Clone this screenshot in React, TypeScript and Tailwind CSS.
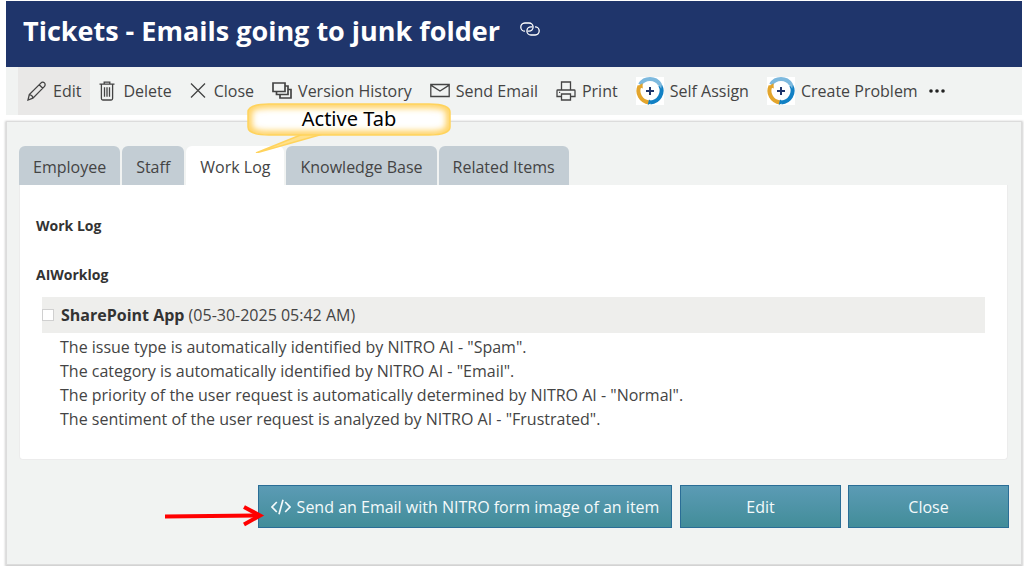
import React from 'react';

const toolbarItems = [
  { label: 'Edit', icon: <PencilIcon />, active: true },
  { label: 'Delete', icon: <TrashIcon /> },
  { label: 'Close', icon: <CrossIcon /> },
  { label: 'Version History', icon: <HistoryIcon /> },
  { label: 'Send Email', icon: <MailIcon /> },
  { label: 'Print', icon: <PrintIcon /> },
  { label: 'Self Assign', icon: <ActionIcon /> },
  { label: 'Create Problem', icon: <ActionIcon /> },
];

const tabs = ['Employee', 'Staff', 'Work Log', 'Knowledge Base', 'Related Items'];

const logLines = [
  'The issue type is automatically identified by NITRO AI - "Spam".',
  'The category is automatically identified by NITRO AI - "Email".',
  'The priority of the user request is automatically determined by NITRO AI - "Normal".',
  'The sentiment of the user request is analyzed by NITRO AI - "Frustrated".',
];

const lineIcon = {
  viewBox: '0 0 20 20',
  fill: 'none',
  stroke: 'currentColor',
  strokeWidth: 1.3,
  'aria-hidden': true,
} as const;

function PencilIcon() {
  return (
    <svg {...lineIcon} className="w-5 h-5 shrink-0">
      <path d="M1 19l1.3-5.4L13.8 2.1c1.1-1.1 2.7-1.1 3.6-.2 1 1 1 2.6-.1 3.7L5.9 17.1 1 19zM2.4 13.7c1.8.2 3.2 1.5 3.6 3.3M12.2 3.7l3.6 3.6" />
    </svg>
  );
}

function TrashIcon() {
  return (
    <svg viewBox="0 0 16 20" fill="none" stroke="currentColor" strokeWidth="1.3" aria-hidden="true" className="w-4 h-5 mr-0.5 shrink-0">
      <path d="M.5 3.2h15M5.2 3V1.2h5.6V3M2.4 3.2v14.3c0 .9.6 1.5 1.4 1.5h8.4c.8 0 1.4-.6 1.4-1.5V3.2M5.5 6.3v9.4M8 6.3v9.4M10.5 6.3v9.4" />
    </svg>
  );
}

function CrossIcon() {
  return (
    <svg viewBox="0 0 16 20" fill="none" stroke="currentColor" strokeWidth="1.3" aria-hidden="true" className="w-4 h-5 mr-0.5 shrink-0">
      <path d="M1 2.5l14 14M15 2.5l-14 14" />
    </svg>
  );
}

function HistoryIcon() {
  return (
    <svg {...lineIcon} strokeWidth={1.7} className="w-5 h-5 shrink-0">
      <path d="M1 2h12v8.5H1zM13 5h3v8.5H4.5v-3M16 8.5h3V17H8v-3.500" />
    </svg>
  );
}

function MailIcon() {
  return (
    <svg {...lineIcon} className="w-5 h-5 shrink-0">
      <path d="M.8 3.5h18.4v12H.8zM.8 4.1L10 10l9.2-5.9" />
    </svg>
  );
}

function PrintIcon() {
  return (
    <svg {...lineIcon} className="w-5 h-5 shrink-0">
      <path d="M5.5 9V1h9v8M5 15.5H1V9.8c0-.5.4-.8.8-.8h16.4c.5 0 .8.4.8.8v5.7h-4M5.5 13h9v6h-9zM3 11.3h1.2" />
    </svg>
  );
}

function ActionIcon() {
  return (
    <svg viewBox="0 0 28 28" fill="none" aria-hidden="true" className="w-7 h-7 shrink-0 bg-white">
      <path d="M4 7.6A11.8 11.8 0 0 1 24 7.6" stroke="#7db9de" strokeWidth="4" />
      <path d="M24.2 8.4A11.6 11.6 0 0 1 14.5 25.4" stroke="#1180c4" strokeWidth="4" />
      <path d="M13 25.4A11.6 11.6 0 0 1 3.6 8.8" stroke="#e3a52c" strokeWidth="4" />
      <path d="M13 22.5l-1.2 5.2 6-2.3z" fill="#1180c4" />
      <path d="M1.3 9.5l5.2-3.2.3 5.3z" fill="#e3a52c" />
      <path d="M21.5 6.5l4.5.2-.8 5z" fill="#7db9de" />
      <path d="M14 10v8M10 14h8" stroke="#1f356b" strokeWidth="2" />
    </svg>
  );
}

function LinkIcon() {
  return (
    <svg viewBox="0 0 20 14" fill="none" stroke="currentColor" strokeWidth="1.3" aria-hidden="true" className="w-5 h-3.5">
      <path d="M5 9.2A4.1 4.1 0 0 1 4.8 1H9a4.1 4.1 0 0 1 0 8.2H7.8M15 4.8a4.1 4.1 0 0 1 .2 8.2H11a4.1 4.1 0 0 1 0-8.2h1.2" />
    </svg>
  );
}

function CodeIcon() {
  return (
    <svg viewBox="0 0 20 16" fill="none" stroke="currentColor" strokeWidth="1.7" aria-hidden="true" className="w-5 h-4 shrink-0">
      <path d="M5.8 3L1 8l4.8 5M14.2 3L19 8l-4.8 5M12 .8L8 15.2" />
    </svg>
  );
}

function Callout() {
  return (
    <div className="absolute left-[228px] -top-[43px] w-[204px] h-[50px]">
      <svg viewBox="0 0 204 50" fill="none" aria-hidden="true" className="absolute inset-0 w-full h-full">
        <defs>
          <filter id="glow" x="-10%" y="-40%" width="120%" height="180%">
            <feGaussianBlur stdDeviation="3" />
          </filter>
          <clipPath id="bubble">
            <path d="M22 1H182C195 1 203 4 203 9V24C203 29 195 32 182 32H22C9 32 1 29 1 24V9C1 4 9 1 22 1Z" />
          </clipPath>
        </defs>
        <path d="M56 31L9 50L76 31Z" fill="#ffe08a" stroke="#ffd35c" strokeWidth="1.5" />
        <g clipPath="url(#bubble)">
          <path d="M0 0h204v33H0z" fill="#fff" />
          <path d="M22 1H182C195 1 203 4 203 9V24C203 29 195 32 182 32H22C9 32 1 29 1 24V9C1 4 9 1 22 1Z" stroke="#ffcf57" strokeWidth="8" filter="url(#glow)" />
        </g>
        <path d="M22 1H182C195 1 203 4 203 9V24C203 29 195 32 182 32H22C9 32 1 29 1 24V9C1 4 9 1 22 1Z" stroke="#ffd35c" strokeWidth="1.5" />
      </svg>
      <p className="relative text-center text-xl leading-8 text-black font-['Noto_Sans',sans-serif]">Active Tab</p>
    </div>
  );
}

function Arrow() {
  return (
    <svg viewBox="0 0 102 22" fill="none" stroke="#ff0000" strokeWidth="4" aria-hidden="true" className="absolute right-full -mr-2 top-5 w-[102px] h-[22px]">
      <path d="M1 11.5L94 10.5" />
      <path d="M80 2L96 10.5L80 19.5" />
    </svg>
  );
}

const buttonClass =
  'h-[43px] flex items-center justify-center gap-1.5 border border-[#2a6d96] bg-linear-to-b from-[#5b9bb5] to-[#428d99] text-base text-[#f4fafb]';

export default function App() {
  return (
    <div className="bg-white pt-px pl-1.5 pr-0.5 pb-0.5 font-['Open_Sans','Noto_Sans',sans-serif] text-[#444444]">
      <header className="h-[66px] flex items-center gap-5 pl-[17px] pb-1.5 bg-[#1f356b] text-white">
        <h1 className="text-[27px] font-bold leading-8 whitespace-nowrap">Tickets - Emails going to junk folder</h1>
        <a href="#link" aria-label="Copy link" className="pb-1"><LinkIcon /></a>
      </header>

      <nav className="h-12 flex items-center pl-3 bg-[#f1f3f2] text-base whitespace-nowrap">
        {toolbarItems.map(({ label, icon, active }) => (
          <button
            key={label}
            type="button"
            className={`h-full flex items-center gap-1.5 px-[9px] ${active ? 'bg-[#e9e8e7]' : ''}`}
          >
            {icon}
            {label}
          </button>
        ))}
        <button type="button" aria-label="More" className="px-px">
          <svg viewBox="0 0 18 4" fill="#222" aria-hidden="true" className="w-[18px] h-1">
            <circle cx="3" cy="2" r="1.8" />
            <circle cx="9" cy="2" r="1.8" />
            <circle cx="15" cy="2" r="1.8" />
          </svg>
        </button>
      </nav>

      <main className="mt-1.5 px-3 pt-6 pb-9 border border-[#dcdcdc] bg-[#f1f3f2] shadow-[0_1px_2px_1px_#d0d0d0]">
        <div className="relative">
          <div role="tablist" className="flex items-end gap-0.5 h-[39px] text-base whitespace-nowrap">
            {tabs.map((tab) => (
              <button
                key={tab}
                type="button"
                role="tab"
                aria-selected={tab === 'Work Log'}
                className={`h-full px-3.5 pt-0.5 rounded-t-md ${tab === 'Work Log' ? 'bg-white' : 'bg-[#c3cdd4]'}`}
              >
                {tab}
              </button>
            ))}
          </div>
          <Callout />
        </div>

        <section className="h-[275px] pl-4 pr-[22px] pt-[31px] mr-px rounded-b border border-t-0 border-[#ececec] bg-white">
          <h2 className="text-sm font-bold leading-5 text-[#333333]">Work Log</h2>
          <h2 className="mt-[29px] text-sm font-bold leading-5 text-[#333333]">AIWorklog</h2>
          <div className="ml-1.5 mt-3">
            <label className="h-9 flex items-center gap-[7px] bg-[#eeeeec] text-base">
              <input type="checkbox" className="appearance-none w-3 h-3 border border-[#d0d0d0] bg-white" />
              <span><strong className="text-[#333333]">SharePoint App</strong> (05-30-2025 05:42 AM)</span>
            </label>
            <div className="pl-[18px] pt-0.5 text-base leading-6">
              {logLines.map((line) => <p key={line}>{line}</p>)}
            </div>
          </div>
        </section>

        <div className="mt-[25px] flex justify-end gap-[7px]">
          <div className="relative mr-px">
            <Arrow />
            <button type="button" className={`${buttonClass} w-[414px]`}>
              <CodeIcon />
              Send an Email with NITRO form image of an item
            </button>
          </div>
          <button type="button" className={`${buttonClass} w-[161px]`}>Edit</button>
          <button type="button" className={`${buttonClass} w-[161px]`}>Close</button>
        </div>
      </main>
    </div>
  );
}
